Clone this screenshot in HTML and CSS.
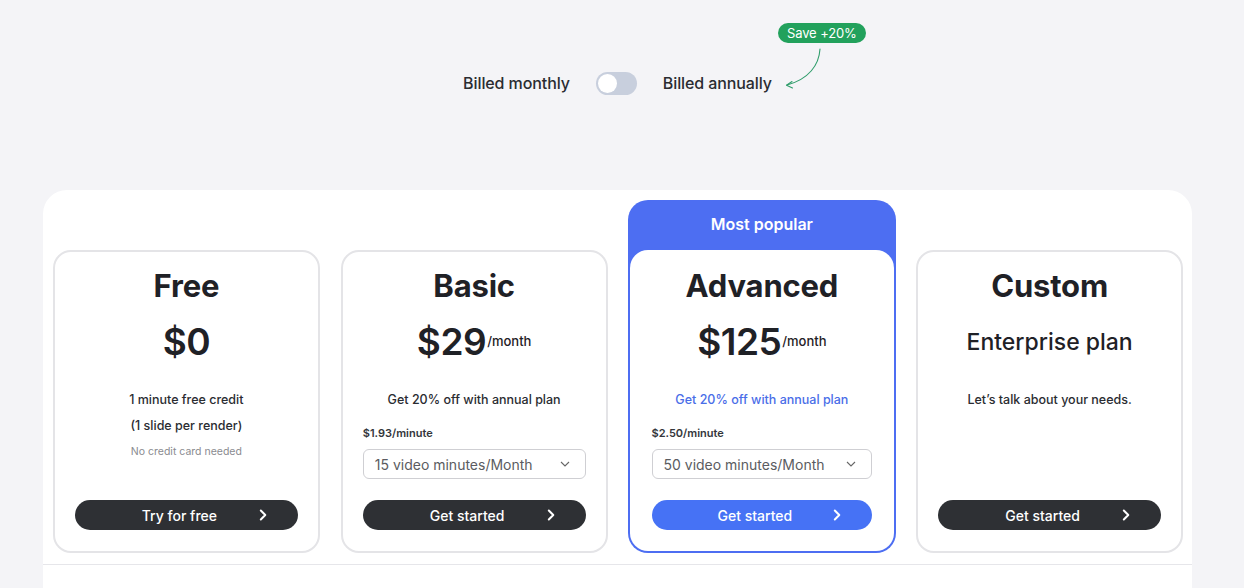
FILE: index.html
```html
<!DOCTYPE html>
<html lang="en">
<head>
<meta charset="utf-8">
<title>Pricing</title>
<link rel="stylesheet" href="styles.css">
</head>
<body>
<div class="page">
  <div class="billing">
    <span class="billing-label">Billed monthly</span>
    <span class="toggle"><span class="knob"></span></span>
    <span class="billing-label annual">Billed annually
      <span class="save">Save +20%</span>
      <svg class="save-arrow" width="44" height="44" viewBox="0 0 44 44" fill="none">
        <path d="M37 2 C36 18 26 32 4 38" stroke="#2f9d6b" stroke-width="1.1" stroke-linecap="round"/>
        <path d="M9 34.5 L3.5 38.2 L9.5 41" stroke="#2f9d6b" stroke-width="1.1" stroke-linecap="round" stroke-linejoin="round"/>
      </svg>
    </span>
  </div>

  <div class="panel">
    <div class="plans">
      <div class="card">
        <h2 class="title">Free</h2>
        <div class="price">$0</div>
        <p class="desc">1 minute free credit</p>
        <p class="desc">(1 slide per render)</p>
        <p class="note">No credit card needed</p>
        <a class="btn">
          <span class="btn-text">Try for free</span>
          <svg class="chev" width="8" height="12" viewBox="0 0 8 12"><path d="M1.8 1.5 L6.3 6 L1.8 10.5" stroke="#fff" stroke-width="2" fill="none" stroke-linecap="round" stroke-linejoin="round"/></svg>
        </a>
      </div>

      <div class="card">
        <h2 class="title">Basic</h2>
        <div class="price">$29<span class="per">/month</span></div>
        <p class="desc">Get 20% off with annual plan</p>
        <p class="rate">$1.93/minute</p>
        <div class="select">
          <span>15 video minutes/Month</span>
          <svg width="10" height="6" viewBox="0 0 10 6"><path d="M1 1 L5 5 L9 1" stroke="#666" stroke-width="1.1" fill="none"/></svg>
        </div>
        <a class="btn">
          <span class="btn-text">Get started</span>
          <svg class="chev" width="8" height="12" viewBox="0 0 8 12"><path d="M1.8 1.5 L6.3 6 L1.8 10.5" stroke="#fff" stroke-width="2" fill="none" stroke-linecap="round" stroke-linejoin="round"/></svg>
        </a>
      </div>

      <div class="popular">
        <div class="popular-head">Most popular</div>
        <div class="card inner">
          <h2 class="title">Advanced</h2>
          <div class="price">$125<span class="per">/month</span></div>
          <p class="desc blue">Get 20% off with annual plan</p>
          <p class="rate">$2.50/minute</p>
          <div class="select">
            <span>50 video minutes/Month</span>
            <svg width="10" height="6" viewBox="0 0 10 6"><path d="M1 1 L5 5 L9 1" stroke="#666" stroke-width="1.1" fill="none"/></svg>
          </div>
          <a class="btn btn-blue">
            <span class="btn-text">Get started</span>
            <svg class="chev" width="8" height="12" viewBox="0 0 8 12"><path d="M1.8 1.5 L6.3 6 L1.8 10.5" stroke="#fff" stroke-width="2" fill="none" stroke-linecap="round" stroke-linejoin="round"/></svg>
          </a>
        </div>
      </div>

      <div class="card">
        <h2 class="title">Custom</h2>
        <div class="enterprise">Enterprise plan</div>
        <p class="desc">Let’s talk about your needs.</p>
        <a class="btn">
          <span class="btn-text">Get started</span>
          <svg class="chev" width="8" height="12" viewBox="0 0 8 12"><path d="M1.8 1.5 L6.3 6 L1.8 10.5" stroke="#fff" stroke-width="2" fill="none" stroke-linecap="round" stroke-linejoin="round"/></svg>
        </a>
      </div>
    </div>
    <div class="divider"></div>
  </div>
</div>
</body>
</html>
```

FILE: styles.css
```css
* { box-sizing: border-box; }

html, body {
  margin: 0;
  background: #f4f4f7;
  font-family: Inter, "Noto Sans", "Liberation Sans", sans-serif;
  color: #222429;
  overflow: hidden;
}

.page {
  padding: 71px 52px 0 43px;
}

.billing {
  display: flex;
  justify-content: center;
  align-items: center;
  gap: 26px;
  height: 24px;
}

.billing-label {
  font-size: 16px;
  font-weight: 500;
  letter-spacing: -0.1px;
  color: #2a2c31;
}

.annual { position: relative; }

.save {
  position: absolute;
  left: calc(100% + 6px);
  top: -50px;
  height: 20px;
  padding: 0 9px;
  border-radius: 10px;
  background: #22a15c;
  color: #fff;
  font-size: 13px;
  font-weight: 400;
  line-height: 20px;
  white-space: nowrap;
}

.save-arrow {
  position: absolute;
  left: calc(100% + 11px);
  top: -26px;
}

.toggle {
  display: flex;
  align-items: center;
  width: 41px;
  height: 23px;
  border-radius: 12px;
  background: #c8cfdd;
  padding: 2px;
}

.knob {
  width: 19px;
  height: 19px;
  border-radius: 50%;
  background: #fff;
}

.panel {
  margin-top: 95px;
  background: #fff;
  border-radius: 24px 24px 0 0;
  padding: 10px 9px 0 10px;
  height: 420px;
}

.plans {
  display: grid;
  grid-template-columns: repeat(4, 1fr);
  column-gap: 21px;
  align-items: end;
}

.card {
  display: flex;
  flex-direction: column;
  align-items: center;
  height: 303px;
  border: 2px solid #e4e4e7;
  border-radius: 18px;
  padding: 16px 20px 21px;
  background: #fff;
}

.popular {
  background: #4d6ef2;
  border-radius: 20px;
  padding: 0 2px 2px;
  margin: 0 -1px;
}

.popular-head {
  height: 50px;
  display: flex;
  align-items: center;
  justify-content: center;
  color: #fff;
  font-size: 16px;
  font-weight: 600;
  padding-bottom: 2px;
}

.card.inner {
  border: none;
  height: 301px;
  border-radius: 18px;
  padding: 18px 22px 21px;
}

.title {
  margin: 0;
  font-size: 31px;
  line-height: 36px;
  font-weight: 700;
  letter-spacing: -0.2px;
  color: #1f2126;
}

.price {
  margin-top: 16px;
  font-size: 37px;
  line-height: 44px;
  height: 44px;
  font-weight: 600;
  letter-spacing: -0.5px;
  color: #1f2126;
}

.per {
  font-size: 13px;
  line-height: 1;
  font-weight: 500;
  letter-spacing: 0;
  vertical-align: 9px;
  margin-left: 1px;
}

.enterprise {
  margin-top: 16px;
  font-size: 23px;
  line-height: 44px;
  font-weight: 500;
  color: #1f2126;
}

.desc {
  margin: 0;
  font-size: 12.5px;
  line-height: 26px;
  font-weight: 500;
  color: #2a2c31;
}

.price + .desc, .enterprise + .desc { margin-top: 23px; }

.desc.blue { color: #4a6ee8; }

.note {
  margin: 3px 0 0;
  font-size: 10.5px;
  line-height: 20px;
  color: #8a8b90;
}

.rate {
  align-self: stretch;
  margin: 12px 0 0;
  font-size: 11px;
  line-height: 16px;
  font-weight: 600;
  color: #34363b;
}

.select {
  align-self: stretch;
  margin-top: 8px;
  height: 30px;
  border: 1px solid #cfcfd3;
  border-radius: 6px;
  display: flex;
  align-items: center;
  justify-content: space-between;
  padding: 0 15px 0 11px;
  font-size: 14px;
  color: #5b5c61;
}

.btn {
  align-self: stretch;
  margin-top: auto;
  height: 30px;
  border-radius: 15px;
  background: #2e3034;
  color: #fff;
  display: grid;
  grid-template-columns: 1fr auto 1fr;
  align-items: center;
  padding-right: 14px;
  font-size: 14px;
  font-weight: 500;
  cursor: pointer;
}

.btn-text { grid-column: 2; }

.chev {
  grid-column: 3;
  justify-self: end;
  margin-right: 17px;
}

.btn-blue { background: #4672f5; }

.divider {
  margin: 11px -9px 0 -10px;
  border-top: 1px solid #e6e6ea;
}
```
